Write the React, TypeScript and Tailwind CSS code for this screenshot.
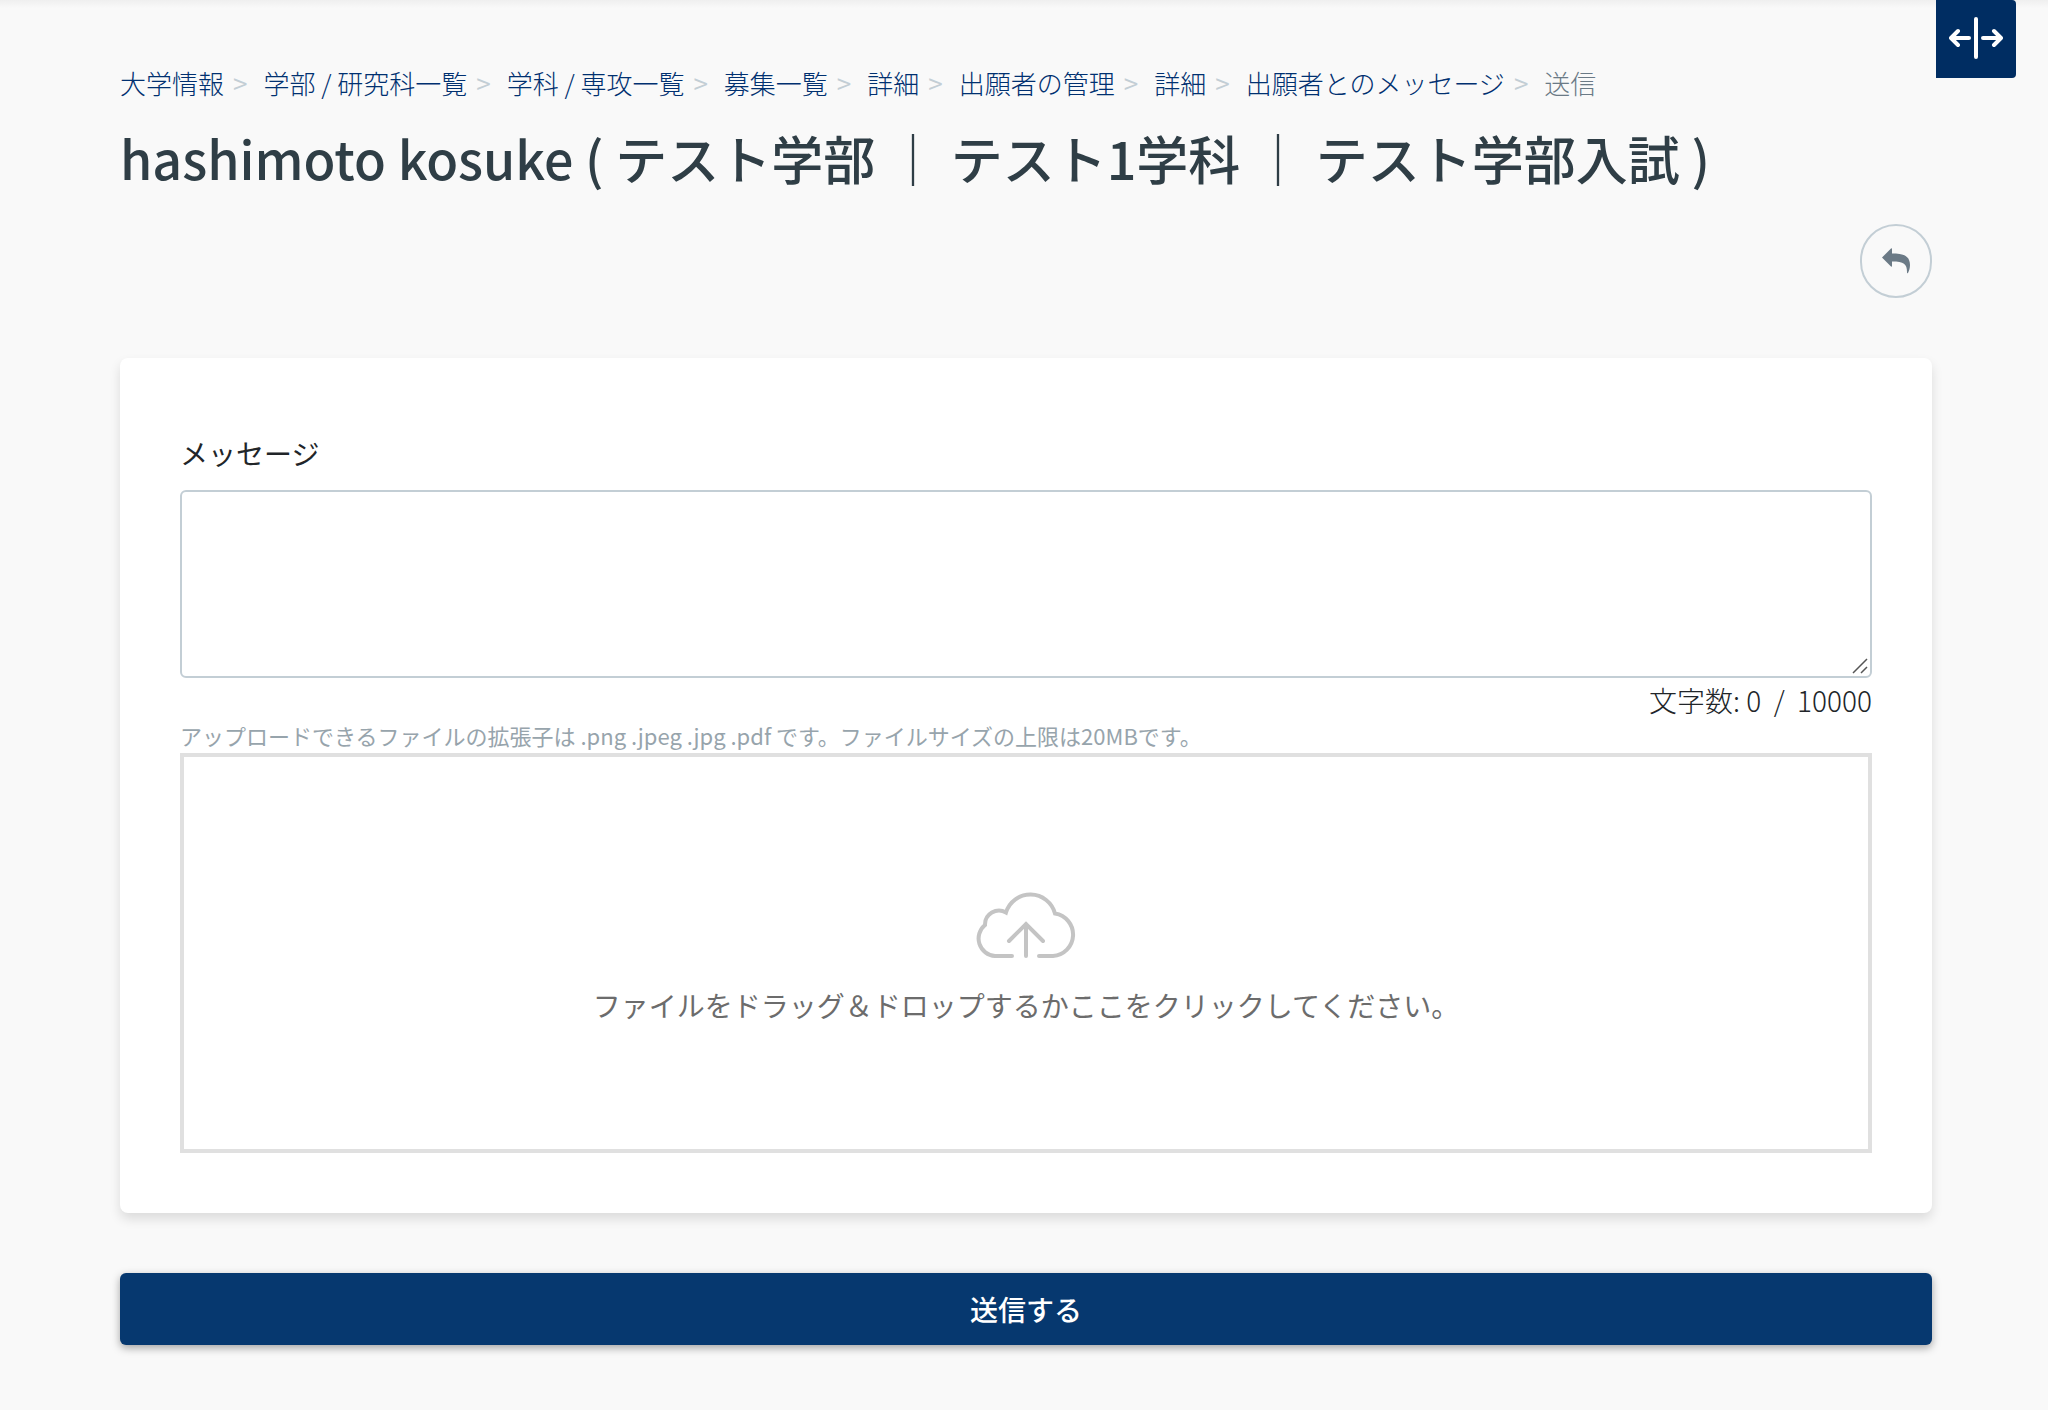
import { Fragment, useState } from 'react';

const MAX_LENGTH = 10000;

const breadcrumbs = [
    '大学情報',
    '学部 / 研究科一覧',
    '学科 / 専攻一覧',
    '募集一覧',
    '詳細',
    '出願者の管理',
    '詳細',
    '出願者とのメッセージ',
];

function ResizeIcon() {
    return (
        <svg viewBox="0 0 54 44" className="h-11 w-[54px]" fill="none" stroke="currentColor" strokeWidth="4" strokeLinecap="round" strokeLinejoin="round">
            <path d="M27 3v38M20 22H3M9 15l-7 7 7 7M34 22h17M45 15l7 7-7 7" />
        </svg>
    );
}

function ReplyIcon() {
    return (
        <svg viewBox="0 0 28 26" className="h-[26px] w-7" fill="currentColor">
            <path d="M0 9.500 9 .5Q10 0 10 1V5.500C20 5.500 28 7 28 17C28 20 27 23 26 25Q25 26 25 24C25 16 22 13.500 10 13.500V18Q10 19 9 18.500Z" />
        </svg>
    );
}

function CloudUploadIcon() {
    return (
        <svg viewBox="1 1 100 66" className="h-[66px] w-[100px] overflow-visible" fill="none" stroke="currentColor" strokeWidth="4" strokeLinecap="round">
            <path d="M37 63H20A17.500 17.500 0 0 1 10 32A14 14 0 0 1 31 19.500A25.500 25.500 0 0 1 80 20.500A21.400 21.400 0 0 1 78 63H64" />
            <path d="M51 63V31M34 48l17-17 17 17" />
        </svg>
    );
}

function GripIcon() {
    return (
        <svg viewBox="0 0 16 16" className="pointer-events-none absolute right-1 bottom-1 size-4" fill="none" stroke="#555" strokeWidth="1.5">
            <path d="M1 15 15 1M9 15l6-6" />
        </svg>
    );
}

export default function App() {
    const [message, setMessage] = useState('');

    return (
        <div className="min-h-screen bg-[#f9f9f9] font-['Noto_Sans_CJK_JP',sans-serif] text-[28px] leading-[42px] font-light text-[#212529]">
            <div className="h-2 bg-linear-to-b from-[#efefef] to-[#f9f9f9]" />

            {/* Sidebar toggle */}
            <button
                type="button"
                aria-label="メニューの切り替え"
                className="absolute top-0 right-8 flex h-[78px] w-20 items-center justify-center rounded-r bg-[#002d62] pb-0.5 text-white"
            >
                <ResizeIcon />
            </button>

            <main className="pt-[55px] pr-[116px] pb-16 pl-[120px]">
                <nav aria-label="breadcrumb">
                    <ol className="flex flex-wrap text-[26px] leading-10">
                        {breadcrumbs.map((label, index) => (
                            <Fragment key={index}>
                                <li>
                                    <a href="#" className="text-[#003070]">
                                        {label}
                                    </a>
                                </li>
                                <li aria-hidden="true" className="pr-4 pl-[9px] font-normal text-[#c3ced5]">
                                    &gt;
                                </li>
                            </Fragment>
                        ))}
                        <li aria-current="page" className="text-[#6b7a86]">送信</li>
                    </ol>
                </nav>

                <h1 className="mt-[19px] text-[52px] leading-[72px] font-medium text-[#2f3e46]">
                    hashimoto kosuke ( テスト学部 ｜ テスト1学科 ｜ テスト学部入試 )
                </h1>

                <div className="mt-[30px] flex justify-end">
                    <a
                        href="#"
                        aria-label="戻る"
                        className="flex h-[74px] w-[72px] items-center justify-center rounded-full border-2 border-[#c3ced5] text-[#6b7a86]"
                    >
                        <ReplyIcon />
                    </a>
                </div>

                <form onSubmit={(e) => e.preventDefault()}>
                    <div className="mt-[60px] rounded-lg bg-white px-[60px] pt-[74px] pb-[60px] shadow-[0_6px_12px_rgba(0,0,0,0.12)]">
                        <label htmlFor="message" className="block font-normal">
                            メッセージ
                        </label>
                        <div className="relative mt-4">
                            <textarea
                                id="message"
                                value={message}
                                maxLength={MAX_LENGTH}
                                onChange={(e) => setMessage(e.target.value)}
                                className="block h-[188px] w-full resize-y rounded-md border-2 border-[#c3ced5] bg-white px-6 py-3 outline-none [&::-webkit-resizer]:bg-transparent"
                            />
                            <GripIcon />
                        </div>
                        <p className="mt-px text-right whitespace-pre">
                            文字数: {message.length}  /  {MAX_LENGTH}
                        </p>

                        <p className="mb-1 text-[22px] leading-7 font-normal text-[#97a4ac]">
                            アップロードできるファイルの拡張子は .png .jpeg .jpg .pdf です。ファイルサイズの上限は20MBです。
                        </p>
                        <label className="flex h-[400px] cursor-pointer flex-col items-center justify-center gap-6 border-4 border-[#e0e0e0] pt-3.5 font-normal text-[#6c6c6c]">
                            <span className="text-[#c4c4c4]">
                                <CloudUploadIcon />
                            </span>
                            ファイルをドラッグ＆ドロップするかここをクリックしてください。
                            <input type="file" accept=".png,.jpeg,.jpg,.pdf" className="sr-only" />
                        </label>
                    </div>

                    <button
                        type="submit"
                        className="mt-[60px] h-[72px] w-full rounded-md bg-[#06386f] font-medium text-white shadow-[0_3px_8px_rgba(0,0,0,0.35)]"
                    >
                        送信する
                    </button>
                </form>
            </main>
        </div>
    );
}
